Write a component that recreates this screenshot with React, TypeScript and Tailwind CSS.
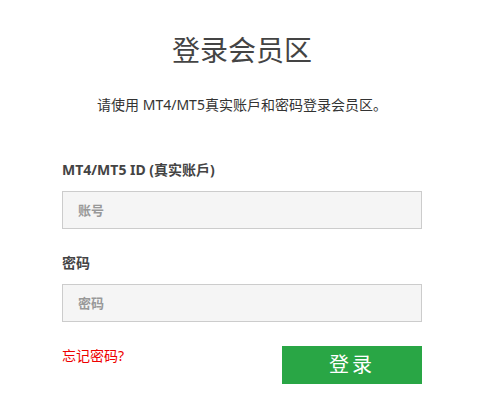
import React from 'react';

const font = { fontFamily: '"Noto Sans", "Noto Sans CJK SC", sans-serif' };

const LoginPanel = () => {
  return (
    <div className="min-h-[416px] w-full bg-white text-[#333]" style={font}>
      <div className="mx-auto w-[360px] pt-[30px]">
        {/* Header */}
        <h1 className="text-center text-[28px] leading-[40px] font-normal text-[#444]">登录会员区</h1>
        <p className="mt-[25px] text-center text-[14px] leading-[20px] text-[#333]">
          请使用 MT4/MT5真实账戶和密码登录会员区。
        </p>

        {/* Account */}
        <label className="mt-[45px] block text-[14px] leading-[20px] font-bold text-[#444]">
          MT4/MT5 ID (真实账戶)
        </label>
        <input
          type="text"
          placeholder="账号"
          className="mt-[11px] block h-[38px] w-full border border-[#ccc] bg-[#f5f5f5] px-[15px] text-[13px] font-semibold text-[#333] outline-none placeholder:text-[#999]"
        />

        {/* Password */}
        <label className="mt-[24px] block text-[14px] leading-[20px] font-bold text-[#444]">密码</label>
        <input
          type="password"
          placeholder="密码"
          className="mt-[11px] block h-[38px] w-full border border-[#ccc] bg-[#f5f5f5] px-[15px] text-[13px] font-semibold text-[#333] outline-none placeholder:text-[#999]"
        />

        <div className="mt-[24px] flex items-start justify-between">
          <a href="#" className="text-[14px] leading-[20px] text-[#e00]">
            忘记密码?
          </a>
          <button className="h-[38px] w-[140px] bg-[#29a645] text-[20px] tracking-[3px] text-white">登录</button>
        </div>
      </div>
    </div>
  );
};

export default function App() {
  return <LoginPanel />;
}
